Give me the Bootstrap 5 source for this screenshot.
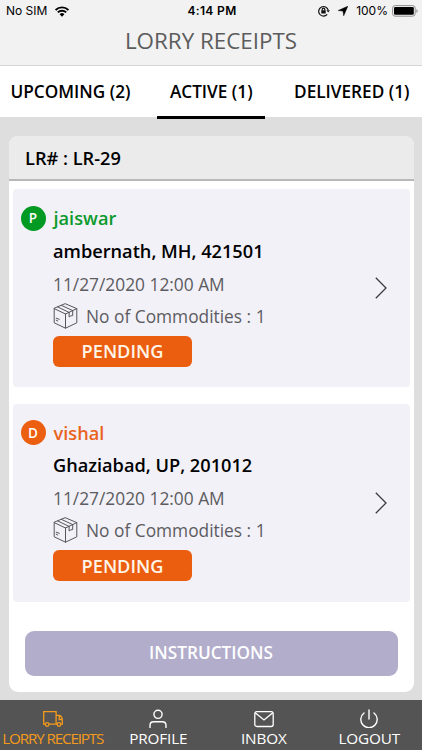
<!DOCTYPE html>
<html lang="en">
<head>
<meta charset="utf-8">
<meta name="viewport" content="width=device-width, initial-scale=1">
<title>Lorry Receipts</title>
<link href="https://cdn.jsdelivr.net/npm/bootstrap@5.3.0/dist/css/bootstrap.min.css" rel="stylesheet">
<style>
body{font-family:"Open Sans","Noto Sans",sans-serif;font-size:17.33px;line-height:24px;background:#dedede;color:#000;height:750px;overflow:hidden}
svg{display:block;flex:none}
.app-top{height:66px;background:#f2f2f2;border-bottom:1px solid #d5d5d5}
.status-bar{height:22px;font-family:Inter,"Liberation Sans",sans-serif;font-size:12px;line-height:22px;padding:0 4px 0 6px}
.status-side{width:130px}
.clock{font-weight:600;letter-spacing:.35px}
.app-title{font-size:22.4px;line-height:38px;color:#5c5c5c}
.tab-strip{height:50.5px;background:#fff;padding:0 12.5px 0 10.5px}
.tab-item{height:53px;line-height:51px;font-weight:600;font-size:17.2px;border-bottom:3px solid transparent;white-space:nowrap;color:#000}
.tab-item.active{border-color:#000;width:108px;margin-left:-2px}
.receipt{margin:19.5px 8.5px 0;height:555.5px;border-radius:9px;border:0;background:#fff}
.receipt-head{height:45px;background:#ebebeb;border-bottom:2px solid #b8b8b8;padding:0 16.5px;line-height:44px;font-weight:600;font-size:18.2px;border-radius:9px 9px 0 0}
.stop{margin:8px 4px 0;height:198px;border-radius:4px;background:#f2f1f8;padding:0 23px 0 8px}
.stop + .stop{margin-top:16.5px}
.stop-body{padding-bottom:4px}
.marker{width:25px;height:25px;border-radius:50%;font-size:13.5px;font-weight:600;color:#fff;background:#029a22}
.stop-name{font-weight:600;font-size:18.2px;margin-left:8px;color:#0c9a2c}
.drop .marker{background:#ec5e10}
.drop .stop-name{color:#e9631d}
.stop-info{padding-left:32.5px;color:#5c5c60}
.place{font-weight:600;font-size:18.2px;color:#000;line-height:32px;margin-top:4px;margin-bottom:1px}
.line{line-height:32px;height:32px}
.state{width:139px;height:31px;border-radius:6px;background:#ec5e0f;color:#fff5e8;font-weight:600;font-size:18.2px;margin-top:4px}
.instructions{height:45px;margin:29px 16px 0;border-radius:9px;background:#b1adcb;border:0;color:#fff;font-weight:600;font-size:17.2px}
.bottom-nav{height:52px;margin-top:8px;background:#545454;color:#fff;font-size:15.3px}
.nav-cell{width:105.5px;padding-top:8px;line-height:20px;white-space:nowrap;color:#fff}
.nav-cell span{letter-spacing:-.15px}
.nav-cell.active{color:#f39a1c}
.nav-cell.active span{letter-spacing:-1.2px}
</style>
<script src="https://cdn.jsdelivr.net/npm/bootstrap@5.3.0/dist/js/bootstrap.bundle.min.js"></script>
</head>
<body>
<svg width="0" height="0" class="d-none">
  <symbol id="box" viewBox="0 0 24 26"><g fill="none" stroke="#55555a" stroke-width="1" stroke-linejoin="round" stroke-linecap="round"><path d="M12 .8 23.3 5.6V19.8L12 25.2.7 19.8V5.6ZM.7 5.6 12 11 23.3 5.6M12 11V25.2M4.3 4 15.6 9.4M8 2.4 19.2 7.6M15.6 9.4V14L17.2 12.9 19.2 12.6V7.6M2.7 15.2 5.8 16.3M2.7 17.2 4.3 18"/></g></symbol>
  <symbol id="chevron" viewBox="0 0 12 22"><path d="M.8.8 11 11 .8 21.2" fill="none" stroke="#3c3c40" stroke-width="1.3"/></symbol>
</svg>
<header class="app-top">
  <div class="status-bar d-flex justify-content-between align-items-center">
    <div class="status-side d-flex align-items-center"><span>No SIM</span>
      <svg class="ms-2" width="14" height="11" viewBox="0 0 14 11"><g fill="none" stroke="#000" stroke-width="1.9"><path d="M.6 4A9 9 0 0 1 13.4 4M2.8 6.4A6 6 0 0 1 11.2 6.4"/></g><path d="M4.6 8.2A3.5 3.5 0 0 1 9.4 8.2L7 10.7Z"/></svg>
    </div>
    <span class="clock">4:14 PM</span>
    <div class="status-side d-flex justify-content-end align-items-center">
      <svg width="12" height="12" viewBox="0 0 12 12"><g fill="none" stroke="#111" stroke-width="1.2"><path d="M9.2 9.4A4.8 4.8 0 1 1 10.2 5.2"/><path d="M4.2 5.6V4.4a1.3 1.3 0 0 1 2.6 0V5.6"/></g><path d="M3.3 5.3h4.4v3.2H3.3ZM8.5 5.2h3.4L10.2 7.4Z" fill="#111"/></svg>
      <svg class="ms-2" width="10" height="10" viewBox="0 0 10 10"><path d="M9.8.2 5.7 9.8 5 5.1.2 4.5Z" stroke="#000" stroke-width=".5"/></svg>
      <span class="mx-1 ps-1">100%</span>
      <svg width="26" height="12" viewBox="0 0 26 12"><rect x=".6" y=".6" width="22.6" height="10.6" rx="2.6" fill="none" stroke="#8d8d8d"/><rect x="2" y="2" width="19.8" height="7.8" rx="1.3"/><path d="M24.4 4v4Q25.7 7.2 25.7 6T24.4 4" fill="#8d8d8d"/></svg>
    </div>
  </div>
  <h1 class="app-title fw-normal text-center m-0">LORRY RECEIPTS</h1>
</header>
<nav class="tab-strip d-flex justify-content-between">
  <a class="tab-item text-decoration-none">UPCOMING (2)</a>
  <a class="tab-item active text-center text-decoration-none">ACTIVE (1)</a>
  <a class="tab-item text-decoration-none">DELIVERED (1)</a>
</nav>
<main class="card receipt">
  <div class="receipt-head">LR# : LR-29</div>
  <section class="stop d-flex justify-content-between align-items-center">
    <div class="stop-body">
      <div class="d-flex align-items-center"><span class="marker d-flex align-items-center justify-content-center">P</span><span class="stop-name">jaiswar</span></div>
      <div class="stop-info">
        <div class="place">ambernath, MH, 421501</div>
        <div class="line">11/27/2020 12:00 AM</div>
        <div class="line d-flex align-items-center gap-2"><svg width="25" height="26"><use href="#box"/></svg><span>No of Commodities : 1</span></div>
        <div class="state d-flex align-items-center justify-content-center">PENDING</div>
      </div>
    </div>
    <svg width="12" height="22"><use href="#chevron"/></svg>
  </section>
  <section class="stop drop d-flex justify-content-between align-items-center">
    <div class="stop-body">
      <div class="d-flex align-items-center"><span class="marker d-flex align-items-center justify-content-center">D</span><span class="stop-name">vishal</span></div>
      <div class="stop-info">
        <div class="place">Ghaziabad, UP, 201012</div>
        <div class="line">11/27/2020 12:00 AM</div>
        <div class="line d-flex align-items-center gap-2"><svg width="25" height="26"><use href="#box"/></svg><span>No of Commodities : 1</span></div>
        <div class="state d-flex align-items-center justify-content-center">PENDING</div>
      </div>
    </div>
    <svg width="12" height="22"><use href="#chevron"/></svg>
  </section>
  <button class="btn instructions p-0">INSTRUCTIONS</button>
</main>
<footer class="bottom-nav d-flex">
  <div class="nav-cell active d-flex flex-column align-items-center">
    <svg width="22" height="20" viewBox="0 0 22 20"><g fill="none" stroke="currentColor" stroke-width="1.3"><path d="M3.6 16.2H1.7V3.7H14.1V16.2H6.8M14.1 7.4H17.5Q20.3 8.5 20.3 12V16.2H18.7M15.5 16.2H14.1M17.2 7.5V11.5H20.2"/><circle cx="5.2" cy="16.5" r="1.8"/><circle cx="17" cy="16.5" r="1.8"/></g></svg>
    <span>LORRY RECEIPTS</span></div>
  <div class="nav-cell d-flex flex-column align-items-center">
    <svg width="20" height="20" viewBox="0 0 20 20"><g fill="none" stroke="currentColor" stroke-width="1.4" stroke-linecap="round"><circle cx="10" cy="6.3" r="4.1"/><path d="M2 19.5V17.5Q2 13.8 5.7 13.8H14.3Q18 13.8 18 17.5V19.5"/></g></svg>
    <span>PROFILE</span></div>
  <div class="nav-cell d-flex flex-column align-items-center">
    <svg width="20" height="20" viewBox="0 0 20 20"><g fill="none" stroke="currentColor" stroke-width="1.3"><rect x=".8" y="3.7" width="18.4" height="14.8" rx="2"/><path d="M1.2 4.7 10 12 18.8 4.7"/></g></svg>
    <span>INBOX</span></div>
  <div class="nav-cell d-flex flex-column align-items-center">
    <svg width="20" height="20" viewBox="0 0 20 20"><g fill="none" stroke="currentColor" stroke-width="1.4" stroke-linecap="round"><path d="M10 2V11M5 5A8.2 8.2 0 1 0 15 5"/></g></svg>
    <span>LOGOUT</span></div>
</footer>
</body>
</html>
